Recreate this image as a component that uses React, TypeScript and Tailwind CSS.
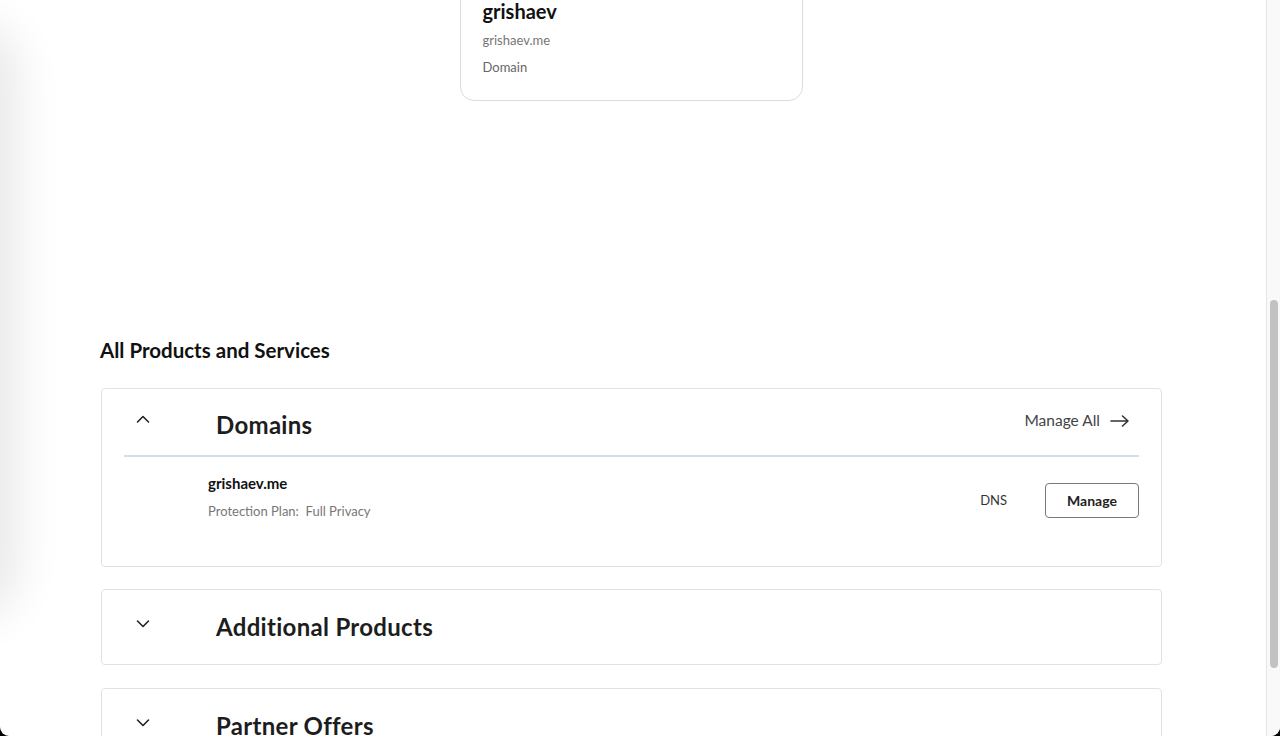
import React from "react";

const font = { fontFamily: "Lato, 'Open Sans', sans-serif" };

function ChevronUp() {
  return (
    <svg width="16" height="10" viewBox="0 0 16 10" fill="none" stroke="#222" strokeWidth="1.6" strokeLinecap="round" strokeLinejoin="round">
      <path d="M2.5 8 L8 2.5 L13.5 8" />
    </svg>
  );
}
function ChevronDown() {
  return (
    <svg width="16" height="10" viewBox="0 0 16 10" fill="none" stroke="#222" strokeWidth="1.6" strokeLinecap="round" strokeLinejoin="round">
      <path d="M2.5 2 L8 7.5 L13.5 2" />
    </svg>
  );
}
function ArrowRight() {
  return (
    <svg width="20" height="14" viewBox="0 0 20 14" fill="none" stroke="#333" strokeWidth="1.6" strokeLinecap="round" strokeLinejoin="round">
      <path d="M1 7 H18 M12.5 2 L18 7 L12.5 12" />
    </svg>
  );
}

function CollapsedCard({ title }: { title: string }) {
  return (
    <div className="border border-[#e2e2e2] rounded-[4px] bg-white">
      <div className="flex items-center h-[74px]">
        <div className="w-[114px] flex justify-start pl-[33px] -mt-[6px]">
          <ChevronDown />
        </div>
        <div className="text-[24px] font-bold text-[#1d1d1d] tracking-[0.3px]">{title}</div>
      </div>
    </div>
  );
}

export default function App() {
  return (
    <div className="w-[1280px] h-[736px] bg-black overflow-hidden" style={font}>
      <div className="relative w-[1280px] h-[736px] bg-white rounded-b-[9px] overflow-hidden flex">
        {/* drawer shadow on left */}
        <div className="absolute left-[-60px] top-[40px] w-[60px] h-[560px] rounded-[30px] shadow-[0_0_45px_18px_rgba(0,0,0,0.09)]" />
        <div className="flex-1 flex flex-col pl-[100px]">
          <div className="w-[1062px] flex flex-col">
            {/* top card */}
            <div className="self-center w-[343px] h-[121px] -mt-[20px] border border-[#dcdcdc] rounded-[14px] px-[22px] pt-[16px]">
              <div className="text-[20px] font-bold text-[#111] leading-[28px]">grishaev</div>
              <div className="text-[13px] text-[#767676] leading-[18px] mt-[6px]">grishaev.me</div>
              <div className="text-[13px] text-[#666] leading-[18px] mt-[9px]">Domain</div>
            </div>

            <div className="mt-[234px] text-[20.5px] font-bold text-[#111] leading-[30px]">All Products and Services</div>

            <div className="mt-[23px] ml-[1px] border border-[#e2e2e2] rounded-[4px] bg-white">
              <div className="flex items-center h-[66px] pt-[6px]">
                <div className="w-[114px] flex justify-start pl-[33px] -mt-[12px]">
                  <ChevronUp />
                </div>
                <div className="flex-1 text-[24px] font-bold text-[#1d1d1d] tracking-[0.3px]">Domains</div>
                <div className="flex items-center gap-[10px] pr-[31px] -mt-[8px]">
                  <span className="text-[15.5px] text-[#444]">Manage All</span>
                  <ArrowRight />
                </div>
              </div>
              <div className="mx-[22px] h-[2px] bg-[#d6dee5]" />
              <div className="flex items-start pl-[106px] pr-[22px] pt-[16px] h-[109px]">
                <div className="flex-1">
                  <div className="text-[15px] font-bold text-[#111] leading-[20px]">grishaev.me</div>
                  <div className="text-[13px] text-[#777] leading-[18px] mt-[9px]">Protection Plan:&nbsp; Full Privacy</div>
                </div>
                <div className="flex items-center mt-[10px]">
                  <span className="text-[13px] text-[#333] mr-[38px]">DNS</span>
                  <button className="w-[94px] h-[35px] border border-[#7a7a7a] rounded-[4px] text-[14px] font-bold text-[#222]">Manage</button>
                </div>
              </div>
            </div>

            <div className="mt-[22px] ml-[1px]">
              <CollapsedCard title="Additional Products" />
            </div>
            <div className="mt-[23px] ml-[1px]">
              <CollapsedCard title="Partner Offers" />
            </div>
          </div>
        </div>
        {/* scrollbar */}
        <div className="w-[14px] h-full border-l border-[#e6e6e6] bg-[#f9f9f9] flex flex-col items-center">
          <div className="mt-[300px] w-[8px] h-[368px] rounded-full bg-[#c2c2c2]" />
        </div>
      </div>
    </div>
  );
}
